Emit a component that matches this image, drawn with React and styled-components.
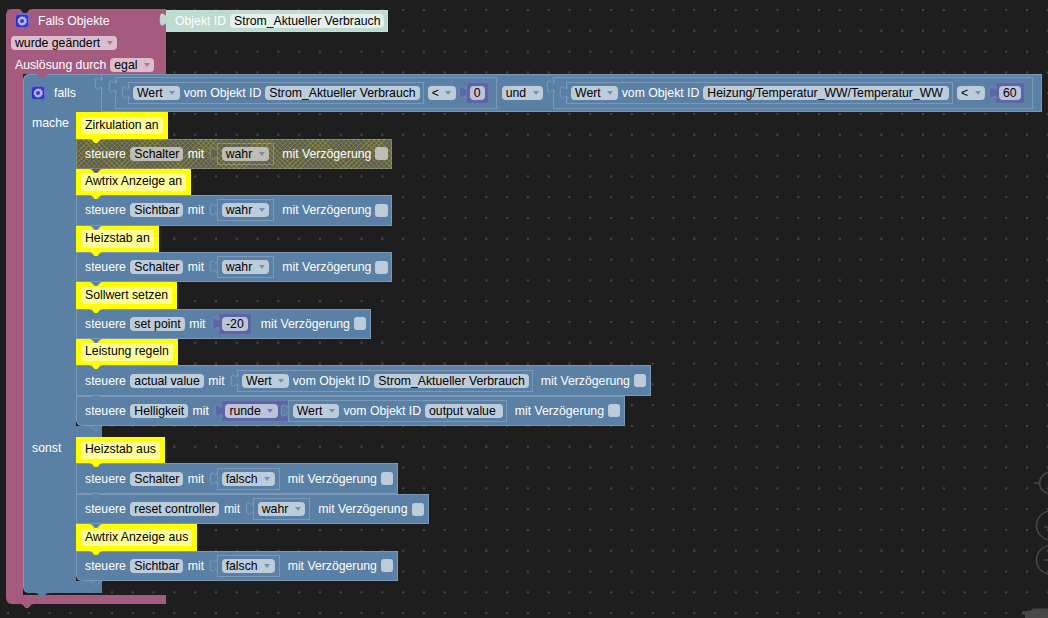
import React from "react";
import styled, { createGlobalStyle } from "styled-components";

const BLUE = "#5b80a5";
const PINK = "#a55b80";
const PURPLE = "#5b67a5";
const MINT = "#bedbd1";
const LINE = "rgba(255,255,255,.2)";
const FIELD = { blue: "#bdccdb", pink: "#dbbdcc", purple: "#bdc2db", grey: "#bdbdb3", mint: "#e6f1ed" };

const Global = createGlobalStyle`
  html, body { margin: 0; padding: 0; background: #1e1e1e; overflow: hidden; }
  body { font: 12.25px/14px "Liberation Sans", Arial, sans-serif; }
`;

const Canvas = styled.div`
  position: relative;
  box-sizing: border-box;
  width: 1048px;
  height: 618px;
  padding: 9px 0 0 6px;
  overflow: hidden;
  background-color: #1e1e1e;
  background-image: radial-gradient(circle at 1px 1px, #5f5f5f .6px, transparent .9px);
  background-size: 20.8px 20.8px;
  background-position: 7px 9px;
`;

const HatTop = styled.div`
  display: flex;
  align-items: flex-start;
`;
const HatTitle = styled.div`
  position: relative;
  box-sizing: border-box;
  display: flex;
  align-items: center;
  gap: 9px;
  width: 160px;
  height: 23px;
  padding-left: 9px;
  color: #fff;
  background: ${PINK};
  border-radius: 6px 0 0 0;
`;
const HatOption = styled.div`
  display: flex;
  align-items: center;
  gap: 4px;
  box-sizing: border-box;
  width: 160px;
  height: ${(p) => p.$h}px;
  padding: ${(p) => p.$top || 0}px 0 0 ${(p) => p.$pad}px;
  color: #fff;
  background: ${PINK};
`;
const HatBody = styled.div`
  display: flex;
  align-items: stretch;
`;
const Rail = styled.div`
  flex: none;
  width: 17px;
  background: ${PINK};
`;
const HatFoot = styled.div`
  position: relative;
  width: 160px;
  height: 9px;
  background: ${PINK};
  border-radius: 0 0 0 6px;
`;

const Falls = styled.div`
  display: flex;
  flex-direction: column;
  margin-bottom: 2.5px;
`;
const FallsHead = styled.div`
  display: flex;
  height: 38.3px;
`;
const FallsLabel = styled.div`
  position: relative;
  flex: none;
  box-sizing: border-box;
  display: flex;
  align-items: center;
  gap: 9px;
  width: 78px;
  padding-left: 8px;
  color: #fff;
  background: ${BLUE};
  border-radius: 6px 0 0 0;
  box-shadow: inset 1px 1px 0 ${LINE};
`;
const Section = styled.div`
  display: flex;
`;
const SectionName = styled.div`
  flex: none;
  box-sizing: border-box;
  width: 53px;
  padding: ${(p) => p.$top}px 0 0 9px;
  color: #fff;
  background: ${BLUE};
  box-shadow: inset 1px 0 0 ${LINE};
`;
const Stack = styled.div`
  display: flex;
  flex-direction: column;
  align-items: flex-start;
`;
const Spacer = styled.div`
  position: relative;
  width: 79px;
  height: ${(p) => p.$h}px;
  background: ${BLUE};
  border-radius: ${(p) => (p.$end ? "0 0 0 6px" : "0")};
  box-shadow: inset 1px 0 0 ${LINE};
`;

const Note = styled.div`
  position: relative;
  box-sizing: border-box;
  display: flex;
  align-items: center;
  height: 26.3px;
  padding: 0 5px;
  background: #ffff00;
`;
const NoteText = styled.span`
  padding: 2px 4px;
  line-height: 13.6px;
  color: #000;
  background: #ffff99;
  border-radius: 3px;
`;

const Row = styled.div`
  position: relative;
  box-sizing: border-box;
  display: flex;
  align-items: center;
  gap: 4.5px;
  height: 30.4px;
  padding: 0 4.5px 0 9px;
  color: #fff;
  background-color: ${BLUE};
  box-shadow: inset 0 0 0 1px ${LINE};
  border-radius: ${(p) => (p.$last ? "0 0 0 6px" : "0")};
  ${(p) =>
    p.$off &&
    `
    background-color: #5e5e58;
    background-image:
      repeating-linear-gradient(45deg, rgba(160,160,30,.42) 0 1px, transparent 1px 3.6px),
      repeating-linear-gradient(-45deg, rgba(160,160,30,.42) 0 1px, transparent 1px 3.6px);
  `}
`;

const Field = styled.span`
  flex: none;
  display: inline-flex;
  align-items: center;
  box-sizing: border-box;
  height: 14px;
  padding: 0 ${(p) => p.$pr ?? (p.$caret ? 4.5 : 4)}px 0 4px;
  gap: 6.5px;
  color: #000;
  white-space: nowrap;
  background: ${(p) => FIELD[p.$tone || "blue"]};
  border-radius: 4px;
`;
const Caret = styled.i`
  width: 0;
  height: 0;
  border-left: 3px solid transparent;
  border-right: 3px solid transparent;
  border-top: 4px solid ${(p) => p.$c};
  opacity: .75;
`;
const Label = styled.span`
  flex: none;
  white-space: nowrap;
`;
const Check = styled.span`
  flex: none;
  width: 12.5px;
  height: 13px;
  margin-left: -.5px;
  background: ${(p) => FIELD[p.$tone || "blue"]};
  border-radius: 3px;
`;

const Value = styled.div`
  position: relative;
  flex: none;
  box-sizing: border-box;
  display: flex;
  align-items: center;
  gap: ${(p) => p.$gap ?? 4}px;
  height: ${(p) => p.$h}px;
  padding: ${(p) => p.$pad};
  margin: ${(p) => p.$m || 0};
  color: #fff;
  background-color: ${(p) => p.$bg || "transparent"};
  box-shadow: inset 0 0 0 1px ${(p) => p.$line || LINE};
`;
const TabShape = styled.svg`
  position: absolute;
  left: -6.5px;
  top: ${(p) => p.$top ?? 3.5}px;
  width: 7.5px;
  height: 13px;
  overflow: visible;
  z-index: 1;
`;
const BumpShape = styled.svg`
  position: absolute;
  left: ${(p) => p.$left ?? 13}px;
  top: ${(p) => (p.$top !== undefined ? `${p.$top}px` : "100%")};
  width: 14px;
  height: 4.5px;
  z-index: 2;
`;
const Controls = styled.svg`
  position: absolute;
  right: 0;
  bottom: 0;
  width: 40px;
  height: 160px;
`;

function Tab({ fill, line = "#7f9cba", top }) {
  return (
    <TabShape viewBox="0 0 8 15" $top={top}>
      <path d="M8 0v.2c0 10-8-8-8 7.3s8-2.5 8 7.3v.2" fill={fill} stroke={line} strokeWidth="1.15" />
    </TabShape>
  );
}
function Bump({ fill, line, left, top }) {
  return (
    <BumpShape viewBox="0 0 14 4.5" $left={left} $top={top}>
      <path d="M0 0c2 0 3 .8 4 2.2S5.5 4 7 4s2-.4 3-1.8S12 0 14 0" fill={fill} stroke={line || "none"} strokeWidth=".8" />
    </BumpShape>
  );
}
function Gear({ size = 14 }) {
  return (
    <svg width={size} height={size} viewBox="0 0 14 14" style={{ flex: "none" }}>
      <rect x=".5" y=".5" width="13" height="13" rx="2.5" fill="#2f35c9" stroke="#6468de" />
      <path d="M7 2l1.2 1 1.6-.2.6 1.5 1.4.8-.4 1.6.6 1.5-1.3 1-.4 1.5-1.6.1L7 12l-1.2-1.1-1.6-.1-.4-1.5-1.3-1 .6-1.5-.4-1.6 1.4-.8.6-1.5 1.6.2z" fill="#b7b3ee" />
      <circle cx="7" cy="7" r="2" fill="#4239c4" />
    </svg>
  );
}
function Drop({ tone = "blue", c = BLUE, children }) {
  return (
    <Field $tone={tone} $caret>
      {children}
      <Caret $c={c} />
    </Field>
  );
}
function Wert({ id, m, idPad, tabTop = 4 }) {
  return (
    <Value $h={22} $pad="0 4px 0 5px" $m={m} $bg={BLUE}>
      <Tab fill={BLUE} top={tabTop} />
      <Drop>Wert</Drop>
      <Label>vom Objekt ID</Label>
      <Field $pr={idPad}>{id}</Field>
    </Value>
  );
}
function Bool({ children, tone, m = "0 3.5px 0 8px" }) {
  const off = tone === "grey";
  return (
    <Value $h={22} $pad="0 5px 0 5px" $m={m} $line={off ? "rgba(220,220,220,.3)" : LINE}>
      <Tab fill={off ? "#62624a" : BLUE} line={off ? "#93937f" : undefined} top={4} />
      <Drop tone={tone} c={BLUE}>{children}</Drop>
    </Value>
  );
}
function Num({ children, m }) {
  return (
    <Value $h={22} $pad="0 4px" $m={m} $bg={PURPLE} $line="rgba(255,255,255,.12)">
      <Tab fill={PURPLE} line="#7985bd" top={4} />
      <Field $tone="purple">{children}</Field>
    </Value>
  );
}
function Compare({ id, num, m, idPad }) {
  return (
    <Value $h={32} $pad="0 8px 0 13px" $m={m} $bg={BLUE}>
      <Tab fill={BLUE} top={3} />
      <Wert id={id} idPad={idPad} />
      <Drop>&lt;</Drop>
      <Num m="0 0 0 6px">{num}</Num>
    </Value>
  );
}
function Comment({ children }) {
  return (
    <Note>
      <NoteText>{children}</NoteText>
      <Bump fill="#ffff00" />
    </Note>
  );
}
function Control({ name, value, off, last }) {
  const tone = off ? "grey" : "blue";
  return (
    <Row $off={off} $last={last}>
      <Label>steuere</Label>
      <Field $tone={tone}>{name}</Field>
      <Label>mit</Label>
      {value}
      <Label>mit Verzögerung</Label>
      <Check $tone={tone} />
      <Bump fill={off ? "#62624a" : BLUE} line={LINE} />
    </Row>
  );
}

export default function App() {
  return (
    <Canvas>
      <Global />
      <HatTop>
        <HatTitle>
          <Bump fill="#1e1e1e" left={12} top={0} />
          <Gear />
          <Label>Falls Objekte</Label>
        </HatTitle>
        <Value $h={22} $pad="0 4px 0 9px" $m="1px 0 0" $bg={MINT} $gap={4} $line="rgba(255,255,255,.1)">
          <Tab fill={MINT} line={MINT} top={3} />
          <Label>Objekt ID</Label>
          <Field $tone="mint">Strom_Aktueller Verbrauch</Field>
        </Value>
      </HatTop>
      <HatOption $h={22} $pad={5}>
        <Drop tone="pink" c={PINK}>wurde geändert</Drop>
      </HatOption>
      <HatOption $h={20} $top={2} $pad={9}>
        <Label>Auslösung durch</Label>
        <Drop tone="pink" c={PINK}>egal</Drop>
      </HatOption>
      <HatBody>
        <Rail />
        <Falls>
          <FallsHead>
            <FallsLabel>
              <Bump fill={PINK} left={12} top={0} />
              <Gear />
              <Label>falls</Label>
            </FallsLabel>
            <Value $h={38.3} $pad="0 9px 0 14px" $bg={BLUE} $gap={5}>
              <Tab fill={BLUE} top={3} />
              <Compare id="Strom_Aktueller Verbrauch" num="0" />
              <Drop>und</Drop>
              <Compare id="Heizung/Temperatur_WW/Temperatur_WW" num="60" idPad={6} m="0 0 0 5px" />
            </Value>
          </FallsHead>
          <Section>
            <SectionName $top={4}>mache</SectionName>
            <Stack>
              <Comment>Zirkulation an</Comment>
              <Control off name="Schalter" value={<Bool tone="grey">wahr</Bool>} />
              <Comment>Awtrix Anzeige an</Comment>
              <Control name="Sichtbar" value={<Bool>wahr</Bool>} />
              <Comment>Heizstab an</Comment>
              <Control name="Schalter" value={<Bool>wahr</Bool>} />
              <Comment>Sollwert setzen</Comment>
              <Control name="set point" value={<Num m="0 4.5px 0 8px">-20</Num>} />
              <Comment>Leistung regeln</Comment>
              <Control name="actual value" value={<Wert id="Strom_Aktueller Verbrauch" m="0 3.5px 0 8px" />} />
              <Control
                last
                name="Helligkeit"
                value={
                  <Value $h={22} $pad="0 0 0 4px" $m="0 3.5px 0 8px" $bg={PURPLE} $gap={10} $line="rgba(255,255,255,.12)">
                    <Tab fill={PURPLE} line="#7985bd" top={4} />
                    <Drop tone="purple" c={PURPLE}>runde</Drop>
                    <Wert id="output value" idPad={7} />
                  </Value>
                }
              />
            </Stack>
          </Section>
          <Spacer $h={11} />
          <Section>
            <SectionName $top={4}>sonst</SectionName>
            <Stack>
              <Comment>Heizstab aus</Comment>
              <Control name="Schalter" value={<Bool>falsch</Bool>} />
              <Control name="reset controller" value={<Bool>wahr</Bool>} />
              <Comment>Awtrix Anzeige aus</Comment>
              <Control last name="Sichtbar" value={<Bool>falsch</Bool>} />
            </Stack>
          </Section>
          <Spacer $h={12} $end>
            <Bump fill={BLUE} left={12} />
          </Spacer>
        </Falls>
      </HatBody>
      <HatFoot>
        <Bump fill={PINK} left={14} />
      </HatFoot>
      <Controls viewBox="0 0 40 160">
        <g fill="none" stroke="#454545" strokeWidth="1.6">
          <circle cx="42" cy="25" r="10.5" />
          <path d="M26 25h5" />
          <circle cx="43" cy="67.5" r="14.5" />
          <path d="M36 69h8" />
          <circle cx="43" cy="102" r="14.5" />
          <path d="M36 102h8" />
        </g>
        <path d="M14 153.5l9-1 2-2h15v6H14z" fill="#484848" />
        <path d="M17 155h23v5H17z" fill="#484848" />
      </Controls>
    </Canvas>
  );
}
